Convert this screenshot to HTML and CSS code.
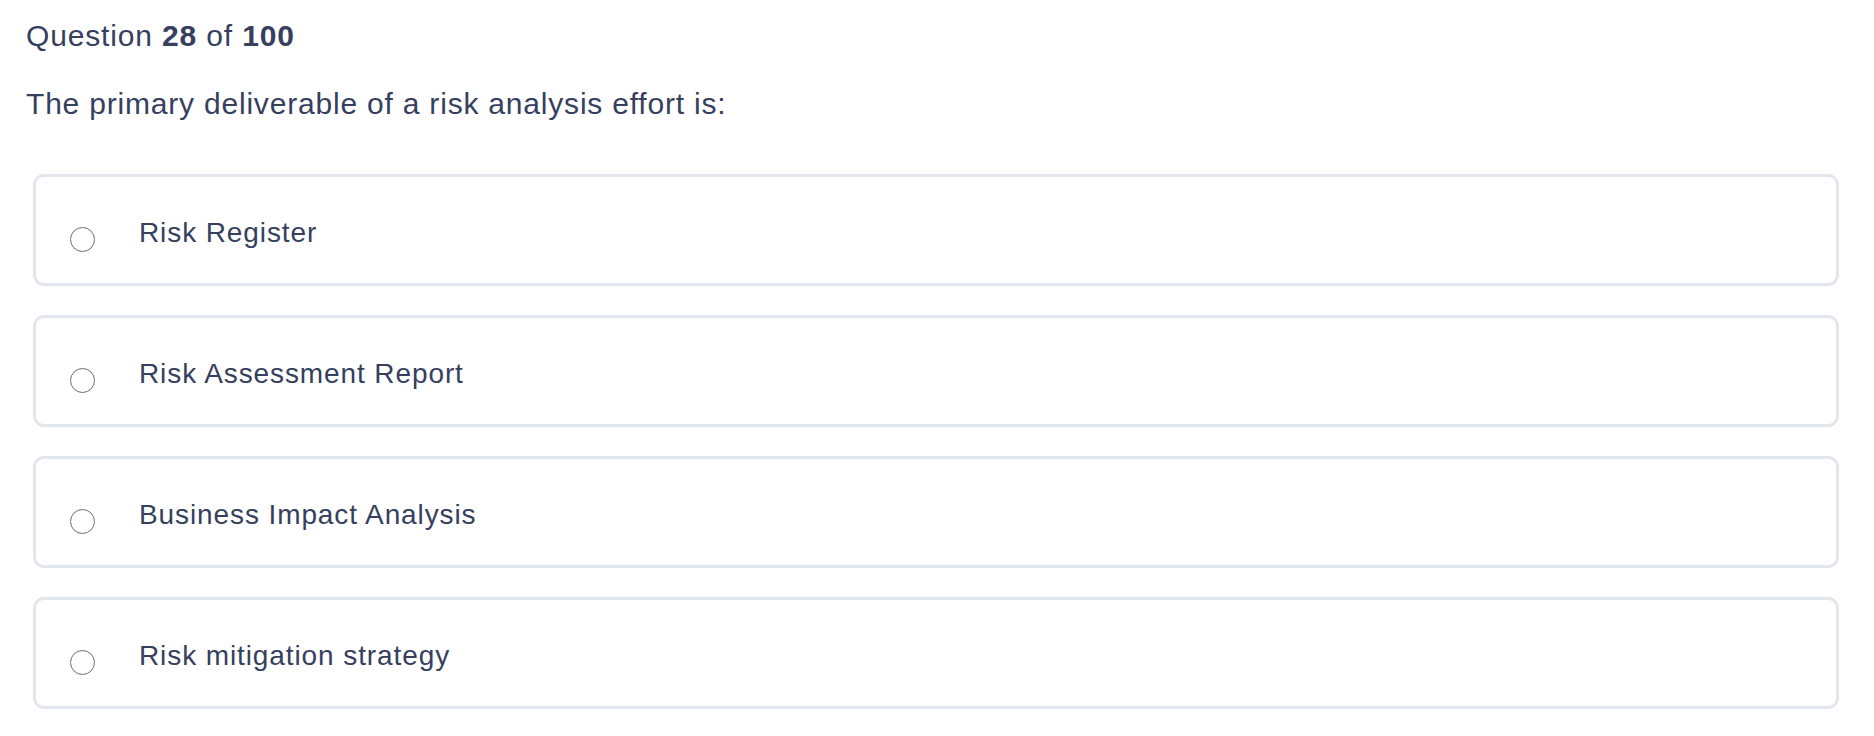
FILE: index.html
```html
<!DOCTYPE html>
<html lang="en">
<head>
<meta charset="utf-8">
<title>Question 28 of 100</title>
<link rel="stylesheet" href="styles.css">
</head>
<body>
<main class="quiz">
  <div class="counter">Question <strong>28</strong> of <strong>100</strong></div>
  <p class="prompt">The primary deliverable of a risk analysis effort is:</p>
  <div class="options">
    <label class="option"><span class="radio"></span><span class="label">Risk Register</span></label>
    <label class="option"><span class="radio"></span><span class="label">Risk Assessment Report</span></label>
    <label class="option"><span class="radio"></span><span class="label">Business Impact Analysis</span></label>
    <label class="option"><span class="radio"></span><span class="label">Risk mitigation strategy</span></label>
  </div>
</main>
</body>
</html>
```
FILE: styles.css
```css
html, body {
  margin: 0;
  padding: 0;
  background: #ffffff;
}
body {
  font-family: "Liberation Sans", Arial, Helvetica, sans-serif;
  color: #363f5e;
}
.quiz {
  padding: 18px 35px 0 26px;
}
.counter {
  font-size: 30px;
  line-height: 36px;
  letter-spacing: 0.85px;
}
.counter strong {
  font-weight: 700;
}
.prompt {
  margin: 32px 0 0 0;
  font-size: 30px;
  line-height: 36px;
  letter-spacing: 0.8px;
}
.options {
  margin-top: 52px;
  margin-left: 7px;
  display: flex;
  flex-direction: column;
  gap: 29px;
}
.option {
  display: flex;
  align-items: center;
  height: 112px;
  box-sizing: border-box;
  border: 3px solid #e2e6ed;
  border-radius: 11px;
  padding-left: 34px;
}
.radio {
  width: 23px;
  height: 23px;
  border: 1.8px solid #6e6e6e;
  border-radius: 50%;
  margin-top: 19px;
  flex: none;
}
.label {
  margin-left: 44px;
  font-size: 28px;
  letter-spacing: 0.9px;
  margin-top: 5px;
}
```
